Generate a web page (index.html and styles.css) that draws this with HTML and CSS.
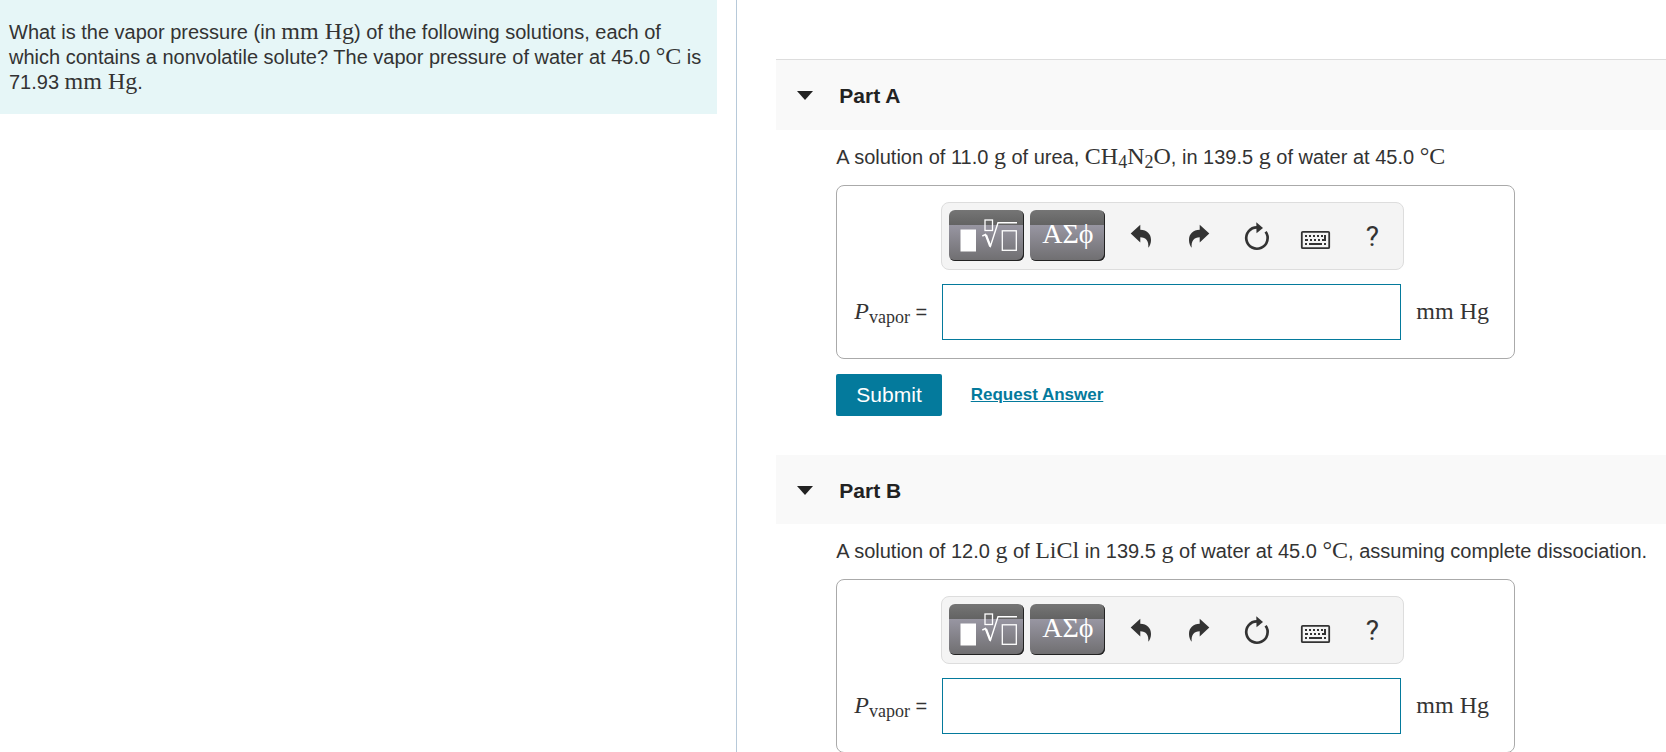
FILE: index.html
```html
<!DOCTYPE html>
<html lang="en">
<head>
    <meta charset="UTF-8">
    <meta name="viewport" content="width=device-width, initial-scale=1.0">
    <title>Vapor Pressure of Solutions</title>
    <link rel="stylesheet" href="styles.css">
</head>
<body>

<!-- Shared toolbar icons -->
<svg class="icon-defs" aria-hidden="true">
    <symbol id="icon-caret" viewBox="0 0 16 9">
        <path d="M0 0H16L8 9Z" fill="currentColor"/>
    </symbol>
    <symbol id="icon-template" viewBox="0 0 75 51">
        <rect x="11.5" y="19.5" width="15.5" height="22" fill="#fff"/>
        <g fill="none" stroke="#fff">
            <rect x="36" y="10" width="7.5" height="10.5" stroke-width="1.3"/>
            <path d="M33.3 26L36.5 24.5L41.5 36L49 12.8H68" stroke-width="1.4"/>
            <path d="M37 25L41.3 36.5" stroke-width="2.2"/>
            <rect x="53.3" y="20.8" width="14" height="19.5" stroke-width="1.3"/>
        </g>
    </symbol>
    <symbol id="icon-arrow" viewBox="0 0 32 32">
        <path d="M5.7 12.5L15.3 3.7V8.8C22 9 26 13 26 19C26 22 25 25 23.3 26.7C24 20 21 16.2 15.3 16.2V21.5Z" fill="currentColor"/>
    </symbol>
    <symbol id="icon-reset" viewBox="0 0 32 32">
        <path d="M16 6.3A10.7 10.7 0 1 0 24.6 10.7" fill="none" stroke="currentColor" stroke-width="2.7"/>
        <path d="M15.3 1.3L22 7L15.5 12.3Z" fill="currentColor"/>
    </symbol>
    <symbol id="icon-keyboard" viewBox="0 0 32 32">
        <rect x="2.8" y="10.8" width="27.4" height="16.4" rx="1" fill="none" stroke="currentColor" stroke-width="1.8"/>
        <path d="M6 15H24.5" stroke="currentColor" stroke-width="2" stroke-dasharray="2 2"/>
        <path d="M6 19H9M11 19H13M15 19H17M19 19H21M23 19H27M26 14V19" fill="none" stroke="currentColor" stroke-width="2"/>
        <path d="M6 23H8M10 23H23M25 23H27" stroke="currentColor" stroke-width="2"/>
    </symbol>
</svg>

<div class="page">
    <aside class="intro">
        <p class="intro-text">What is the vapor pressure (in <span class="math">mm Hg</span>) of the following solutions, each of which contains a nonvolatile solute? The vapor pressure of water at 45.0 <span class="math">°C</span> is 71.93 <span class="math">mm Hg</span>.</p>
    </aside>

    <main class="parts">
        <section class="part">
            <h2 class="part-header">
                <button class="part-toggle" type="button" aria-expanded="true">
                    <svg class="caret"><use href="#icon-caret"/></svg>
                    Part A
                </button>
            </h2>
            <div class="part-body">
                <p class="question">A solution of 11.0 <span class="math">g</span> of urea, <span class="math">CH<sub>4</sub>N<sub>2</sub>O</span>, in 139.5 <span class="math">g</span> of water at 45.0 <span class="math">°C</span></p>
                <form class="answer" id="form-a">
                    <div class="toolbar">
                        <button class="tool-key" type="button" aria-label="Templates"><svg class="template"><use href="#icon-template"/></svg></button>
                        <button class="tool-key greek" type="button">ΑΣϕ</button>
                        <div class="tool-icons">
                            <button class="tool" type="button" aria-label="Undo"><svg class="icon"><use href="#icon-arrow"/></svg></button>
                            <button class="tool" type="button" aria-label="Redo"><svg class="icon flipped"><use href="#icon-arrow"/></svg></button>
                            <button class="tool" type="button" aria-label="Reset"><svg class="icon"><use href="#icon-reset"/></svg></button>
                            <button class="tool" type="button" aria-label="Keyboard"><svg class="icon"><use href="#icon-keyboard"/></svg></button>
                            <button class="tool help" type="button">?</button>
                        </div>
                    </div>
                    <label class="answer-label" for="answer-a"><span class="math"><i>P</i><sub>vapor</sub></span> =</label>
                    <input class="answer-input" id="answer-a" type="text">
                    <span class="answer-unit math">mm Hg</span>
                </form>
                <div class="actions">
                    <button class="submit" type="submit" form="form-a">Submit</button>
                    <a class="request" href="#">Request Answer</a>
                </div>
            </div>
        </section>

        <section class="part">
            <h2 class="part-header">
                <button class="part-toggle" type="button" aria-expanded="true">
                    <svg class="caret"><use href="#icon-caret"/></svg>
                    Part B
                </button>
            </h2>
            <div class="part-body">
                <p class="question">A solution of 12.0 <span class="math">g</span> of <span class="math">LiCl</span> in 139.5 <span class="math">g</span> of water at 45.0 <span class="math">°C</span>, assuming complete dissociation.</p>
                <form class="answer" id="form-b">
                    <div class="toolbar">
                        <button class="tool-key" type="button" aria-label="Templates"><svg class="template"><use href="#icon-template"/></svg></button>
                        <button class="tool-key greek" type="button">ΑΣϕ</button>
                        <div class="tool-icons">
                            <button class="tool" type="button" aria-label="Undo"><svg class="icon"><use href="#icon-arrow"/></svg></button>
                            <button class="tool" type="button" aria-label="Redo"><svg class="icon flipped"><use href="#icon-arrow"/></svg></button>
                            <button class="tool" type="button" aria-label="Reset"><svg class="icon"><use href="#icon-reset"/></svg></button>
                            <button class="tool" type="button" aria-label="Keyboard"><svg class="icon"><use href="#icon-keyboard"/></svg></button>
                            <button class="tool help" type="button">?</button>
                        </div>
                    </div>
                    <label class="answer-label" for="answer-b"><span class="math"><i>P</i><sub>vapor</sub></span> =</label>
                    <input class="answer-input" id="answer-b" type="text">
                    <span class="answer-unit math">mm Hg</span>
                </form>
            </div>
        </section>
    </main>
</div>

</body>
</html>
```
FILE: styles.css
```css
* {
    box-sizing: border-box;
}

body {
    margin: 0;
    font-family: "Liberation Sans", Arial, sans-serif;
    font-size: 20px;
    line-height: 24px;
    color: #333;
    background: #fff;
}

button {
    margin: 0;
    padding: 0;
    border: none;
    background: none;
    font: inherit;
    color: inherit;
    cursor: pointer;
}

p {
    margin: 0;
}

.icon-defs {
    display: none;
}

.page {
    display: grid;
    grid-template-columns: 44.2% 1fr;
    height: 100vh;
}

/* Problem statement */
.intro {
    padding-right: 19px;
}

.intro-text {
    padding: 20px 9px 19px;
    background: #e6f6f7;
    line-height: 25px;
}

/* Formulas and units */
.math {
    font-family: "Liberation Serif", "Times New Roman", serif;
    font-size: 24px;
    line-height: 20px;
    white-space: nowrap;
}

.math sub {
    font-size: 18px;
    line-height: 0;
    vertical-align: -4px;
}

/* Parts */
.parts {
    min-width: 0;
    padding: 59px 0 0 39px;
    border-left: 1px solid #b7c9d9;
    overflow-y: auto;
    scrollbar-width: none;
}

.part-header {
    margin: 0;
    background: #f9f9f9;
    font-size: 21px;
    color: #222;
}

.part:first-child .part-header {
    padding-bottom: 1px;
    border-top: 1px solid #ddd;
}

.part-toggle {
    display: flex;
    align-items: center;
    gap: 26px;
    width: 100%;
    padding: 24px 21px 21px;
    font-weight: bold;
    text-align: left;
}

.caret {
    width: 16px;
    height: 9px;
    margin-bottom: 2px;
}

.part-body {
    padding: 15px 0 39px 60px;
}

.question {
    padding-bottom: 16px;
}

/* Answer box */
.answer {
    display: grid;
    grid-template-columns: 87px 1fr 110px;
    row-gap: 14px;
    align-items: center;
    max-width: 679px;
    padding: 16px 0 18px 17px;
    border: 1px solid #aaa;
    border-radius: 8px;
}

.toolbar {
    grid-column: 2;
    display: flex;
    align-items: center;
    gap: 6px;
    height: 68px;
    padding: 0 2px 1px 7px;
    border: 1px solid #ddd;
    border-radius: 8px;
    background: #f4f4f4;
}

.tool-key {
    flex: 0 0 75px;
    height: 51px;
    border-radius: 6px;
    background: linear-gradient(#757575, #636363 15px, #9896a2 15px, #6f6e70);
    box-shadow: inset -1px -1px 0 #222;
    color: #fff;
}

.template {
    display: block;
    width: 75px;
    height: 51px;
}

.greek {
    padding-bottom: 3px;
    font-family: "Liberation Serif", serif;
    font-size: 28px;
}

.tool-icons {
    flex: 1;
    display: grid;
    grid-template-columns: repeat(5, 1fr);
    padding: 2px 0 0 1px;
}

.tool {
    display: flex;
    align-items: center;
    justify-content: center;
    height: 51px;
}

.icon {
    width: 32px;
    height: 32px;
}

.flipped {
    transform: scaleX(-1);
}

.help {
    font-family: Roboto, sans-serif;
    font-size: 28px;
}

.answer-label {
    grid-column: 1;
    padding-bottom: 1px;
}

.answer-input {
    width: calc(100% - 4px);
    height: 56px;
    margin: 0 1px;
    padding: 0 10px;
    border: 1px solid #047a9c;
    font: inherit;
    color: inherit;
}

.answer-unit {
    padding: 0 0 2px 12px;
}

/* Buttons below the box */
.actions {
    display: flex;
    align-items: center;
    gap: 29px;
    padding-top: 15px;
}

.submit {
    padding: 9px 20px;
    border-radius: 2px;
    background: #047a9c;
    font-size: 21px;
    color: #fff;
}

.request {
    font-size: 17px;
    font-weight: bold;
    color: #047a9c;
}
```
